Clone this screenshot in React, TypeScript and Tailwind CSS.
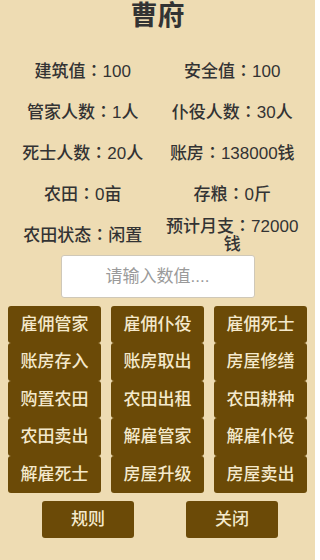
import React from "react";

const stats: [string, string][] = [
  ["建筑值：100", "安全值：100"],
  ["管家人数：1人", "仆役人数：30人"],
  ["死士人数：20人", "账房：138000钱"],
  ["农田：0亩", "存粮：0斤"],
  ["农田状态：闲置", "预计月支：72000钱"],
];

const buttons = [
  "雇佣管家", "雇佣仆役", "雇佣死士",
  "账房存入", "账房取出", "房屋修缮",
  "购置农田", "农田出租", "农田耕种",
  "农田卖出", "解雇管家", "解雇仆役",
  "解雇死士", "房屋升级", "房屋卖出",
];

function Stat({ text }: { text: string }) {
  const [k, v] = text.split("：");
  return (
    <div className="text-center px-[8px]">
      {k}
      <span style={{ fontFamily: '"Noto Sans CJK TC", sans-serif' }}>：</span>
      {v}
    </div>
  );
}

export default function App() {
  return (
    <div
      className="w-[315px] h-[560px] bg-[#eedcb3] text-[#333] overflow-hidden"
      style={{ fontFamily: '"Liberation Sans", "Noto Sans CJK SC", sans-serif' }}
    >
      <div className="h-[32px] leading-[32px] text-center text-[27px] font-bold text-[#333]">曹府</div>
      <div className="mt-[18px] px-2">
        {stats.map(([a, b], i) => (
          <div key={i} className="grid grid-cols-2 h-[41px] items-center text-[17px] leading-[18px] font-medium">
            <Stat text={a} />
            <Stat text={b} />
          </div>
        ))}
      </div>
      <div className="flex justify-center">
        <input
          className="w-[194px] h-[43px] bg-white border border-[#cfc8b8] rounded-[3px] text-center text-[17px] outline-none placeholder:text-[#9a9a9a]"
          placeholder="请输入数值...."
        />
      </div>
      <div className="mt-[8px] px-2 grid grid-cols-3 gap-x-[10px]">
        {buttons.map((t) => (
          <div
            key={t}
            className="h-[37.4px] bg-[#6b4a07] rounded-[3px] flex items-center justify-center text-[17px] font-medium text-[#f4e9cc]"
          >
            {t}
          </div>
        ))}
      </div>
      <div className="mt-[8px] flex pl-[42px] gap-[52px]">
        <div className="w-[92px] h-[37px] bg-[#6b4a07] rounded-[3px] flex items-center justify-center text-[17px] font-medium text-[#f4e9cc]">规则</div>
        <div className="w-[92px] h-[37px] bg-[#6b4a07] rounded-[3px] flex items-center justify-center text-[17px] font-medium text-[#f4e9cc]">关闭</div>
      </div>
    </div>
  );
}
